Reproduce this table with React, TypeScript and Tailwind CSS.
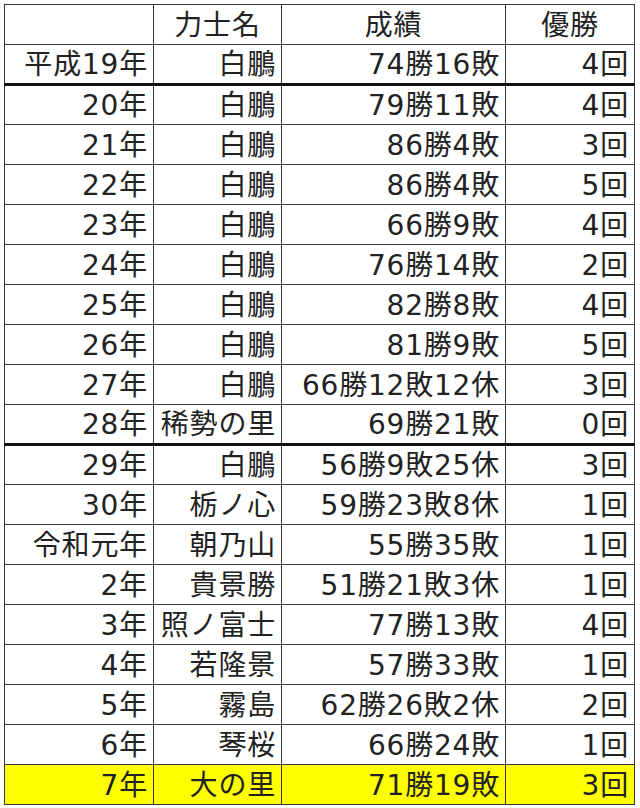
import React from 'react';

type Row = { year: string; name: string; record: string; wins: string; thick?: boolean; hl?: boolean };

const rows: Row[] = [
  { year: '平成19年', name: '白鵬', record: '74勝16敗', wins: '4回', thick: true },
  { year: '20年', name: '白鵬', record: '79勝11敗', wins: '4回' },
  { year: '21年', name: '白鵬', record: '86勝4敗', wins: '3回' },
  { year: '22年', name: '白鵬', record: '86勝4敗', wins: '5回' },
  { year: '23年', name: '白鵬', record: '66勝9敗', wins: '4回' },
  { year: '24年', name: '白鵬', record: '76勝14敗', wins: '2回' },
  { year: '25年', name: '白鵬', record: '82勝8敗', wins: '4回' },
  { year: '26年', name: '白鵬', record: '81勝9敗', wins: '5回' },
  { year: '27年', name: '白鵬', record: '66勝12敗12休', wins: '3回' },
  { year: '28年', name: '稀勢の里', record: '69勝21敗', wins: '0回', thick: true },
  { year: '29年', name: '白鵬', record: '56勝9敗25休', wins: '3回' },
  { year: '30年', name: '栃ノ心', record: '59勝23敗8休', wins: '1回' },
  { year: '令和元年', name: '朝乃山', record: '55勝35敗', wins: '1回' },
  { year: '2年', name: '貴景勝', record: '51勝21敗3休', wins: '1回' },
  { year: '3年', name: '照ノ富士', record: '77勝13敗', wins: '4回' },
  { year: '4年', name: '若隆景', record: '57勝33敗', wins: '1回' },
  { year: '5年', name: '霧島', record: '62勝26敗2休', wins: '2回' },
  { year: '6年', name: '琴桜', record: '66勝24敗', wins: '1回' },
  { year: '7年', name: '大の里', record: '71勝19敗', wins: '3回', hl: true },
];

const cell = 'border-[1.5px] border-[#3a3a3a] h-[40px] p-0 pt-[2px] pr-[5px] text-right align-middle leading-none';
const head = 'border-[1.5px] border-[#3a3a3a] h-[40px] p-0 pt-[3px] text-center align-middle leading-none font-normal';
const thickB = 'border-b-[3px] border-b-[#111]';

export default function App() {
  return (
    <div
      className="w-[640px] h-[808px] bg-white pt-[4px] pl-[4px] text-[28px] tracking-[0.8px] text-[#222]"
      style={{ fontFamily: '"DejaVu Sans", "Noto Sans CJK JP", sans-serif' }}
    >
      <table className="border-collapse table-fixed w-[630px]">
        <colgroup>
          <col className="w-[149px]" />
          <col className="w-[128px]" />
          <col className="w-[224px]" />
          <col className="w-[129px]" />
        </colgroup>
        <thead>
          <tr>
            <th className={head}></th>
            <th className={head}>力士名</th>
            <th className={head}>成績</th>
            <th className={head}>優勝</th>
          </tr>
        </thead>
        <tbody>
          {rows.map((r) => (
            <tr key={r.year} className={r.hl ? 'bg-[#ffff00]' : ''}>
              <td className={`${cell} ${r.thick ? thickB : ''}`}>{r.year}</td>
              <td className={`${cell} ${r.thick ? thickB : ''}`}>{r.name}</td>
              <td className={`${cell} ${r.thick ? thickB : ''}`}>{r.record}</td>
              <td className={`${cell} ${r.thick ? thickB : ''}`}>{r.wins}</td>
            </tr>
          ))}
        </tbody>
      </table>
    </div>
  );
}
